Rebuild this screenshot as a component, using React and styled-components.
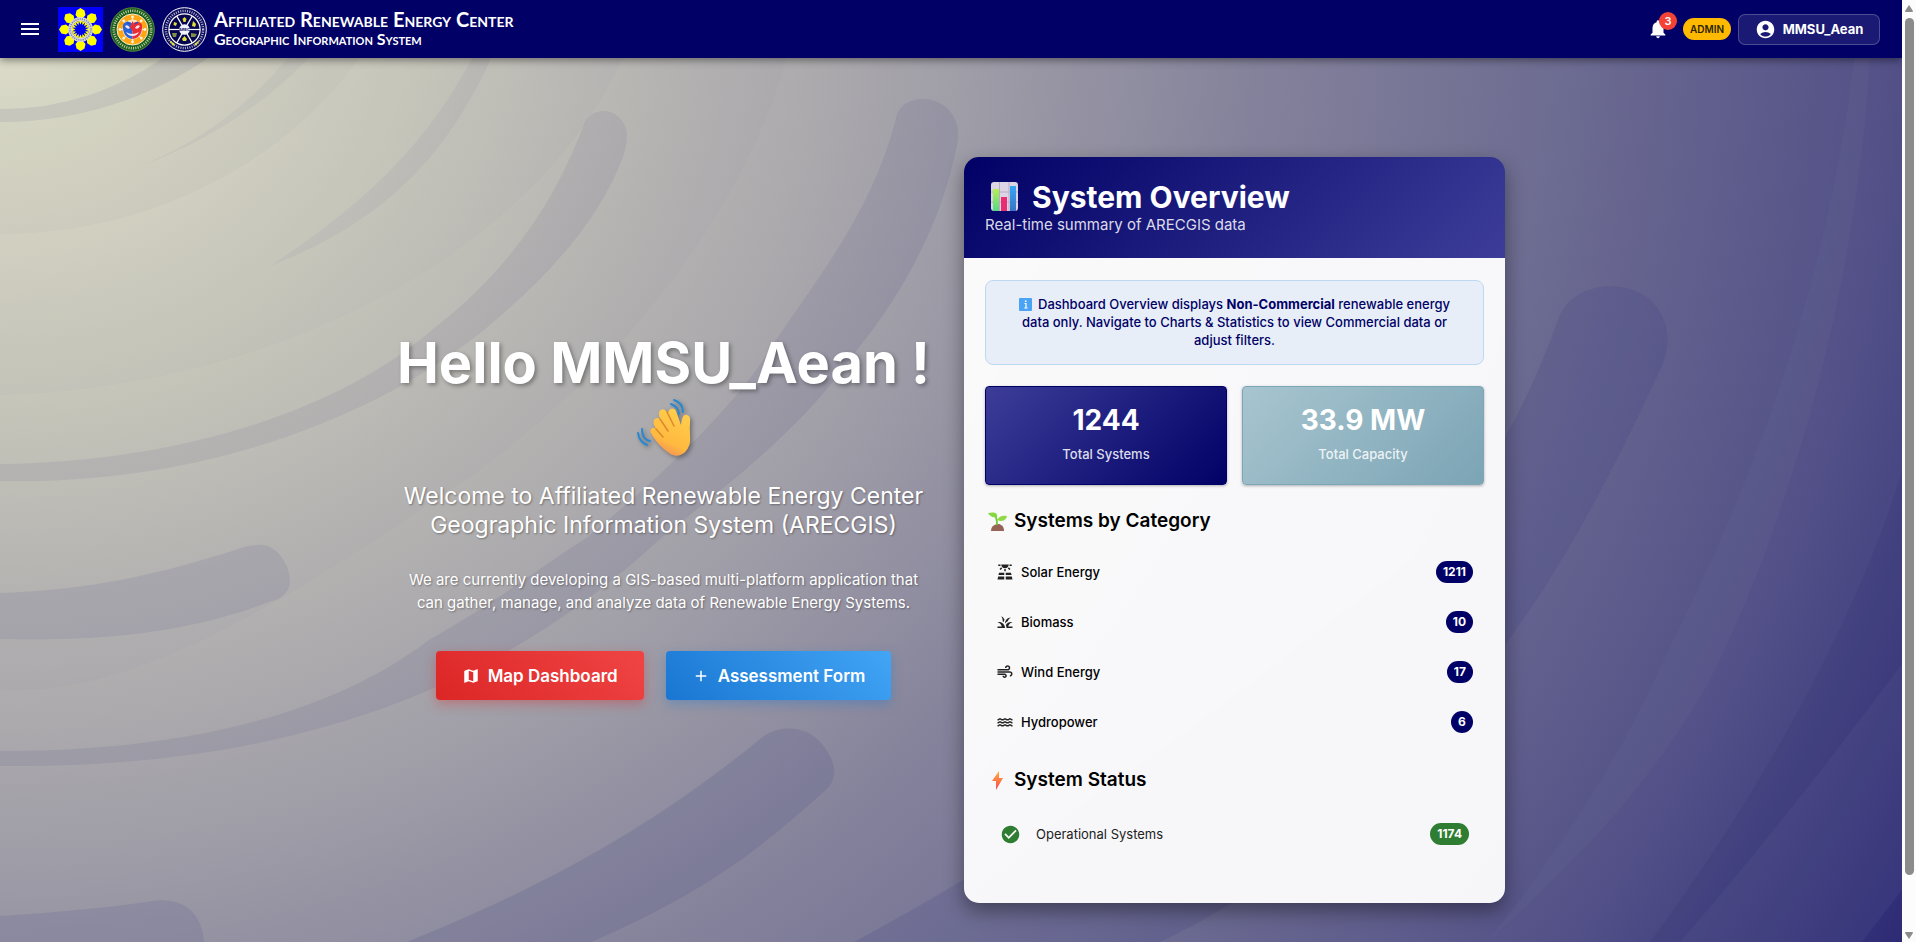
import React from "react";
import styled, { createGlobalStyle } from "styled-components";
import {
  MdMenu,
  MdNotifications,
  MdAccountCircle,
  MdMap,
  MdAdd,
  MdSolarPower,
  MdGrass,
  MdAir,
  MdWater,
  MdCheckCircle,
} from "react-icons/md";

const GlobalStyle = createGlobalStyle`
  *, *::before, *::after { box-sizing: border-box; }
  body {
    margin: 0;
    font-family: Inter, "Open Sans", sans-serif;
    color: #000;
  }
  h1, h2, h3, p, ul { margin: 0; padding: 0; }
  button { font-family: inherit; cursor: pointer; }
`;

const Shell = styled.div`
  display: flex;
  min-height: 100vh;
`;

const Page = styled.div`
  position: relative;
  isolation: isolate;
  flex: 1;
  min-width: 0;
  display: flex;
  flex-direction: column;
  overflow: hidden;
  background: radial-gradient(
    ellipse 116% 207% at 0 0,
    #eeeed0 0%,
    #dbdac3 11%,
    #c1c0b7 25%,
    #9d9ba6 45%,
    #84829b 57%,
    #6e6d92 70%,
    #525087 86%,
    #2e2c79 100%
  );
`;

const Backdrop = styled.svg`
  position: absolute;
  inset: 0;
  z-index: -1;
  width: 100%;
  height: 100%;
`;

const TopBar = styled.header`
  display: flex;
  align-items: center;
  justify-content: space-between;
  height: 58px;
  padding: 0 22px 0 18px;
  background: #000066;
  color: #fff;
  box-shadow: 0 2px 8px rgba(0, 0, 0, 0.45);
`;

const Brand = styled.div`
  display: flex;
  align-items: center;
  gap: 7px;
`;

const IconButton = styled.button`
  position: relative;
  display: flex;
  padding: 0;
  border: 0;
  background: none;
  color: inherit;
`;

const MenuButton = styled(IconButton)`
  margin-right: 9px;
`;

const Logo = styled.svg`
  display: block;
  width: 45px;
  height: 45px;
`;

const BrandText = styled.div`
  font-family: Lato, "Open Sans", sans-serif;
  font-variant: small-caps;
  font-weight: 700;
`;

const BrandName = styled.div`
  font-size: 20px;
  line-height: 20px;
`;

const BrandSub = styled.div`
  font-size: 16px;
  line-height: 20px;
`;

const Account = styled.div`
  display: flex;
  align-items: center;
`;

const Count = styled.span`
  position: absolute;
  top: -6px;
  right: -8px;
  width: 18px;
  height: 18px;
  border-radius: 9px;
  background: #f44336;
  font-size: 11px;
  font-weight: 600;
  line-height: 18px;
  text-align: center;
`;

const RoleChip = styled.span`
  margin: 0 7px 0 14px;
  width: 48px;
  border-radius: 11px;
  background: #ffb900;
  color: #2b2400;
  font-size: 10px;
  font-weight: 600;
  line-height: 22px;
  text-align: center;
`;

const UserButton = styled.button`
  display: flex;
  align-items: center;
  justify-content: center;
  gap: 7px;
  width: 142px;
  height: 31px;
  padding: 0;
  border: 1px solid rgba(255, 255, 255, 0.22);
  border-radius: 7px;
  background: rgba(255, 255, 255, 0.1);
  color: #fff;
  font-size: 13px;
  font-weight: 700;
`;

const Main = styled.main`
  flex: 1;
  display: grid;
  grid-template-columns: minmax(0, 541px) minmax(0, 541px);
  justify-content: center;
  align-items: center;
  gap: 30px;
  padding: 99px 4px 39px 0;
`;

const Hero = styled.section`
  padding-bottom: 30px;
  color: #fff;
  text-align: center;
`;

const Greeting = styled.h1`
  font-size: 56px;
  font-weight: 700;
  line-height: 67px;
  white-space: nowrap;
  text-shadow: 2px 2px 4px rgba(0, 0, 0, 0.35);
`;

const Wave = styled.svg`
  display: block;
  width: 56px;
  height: 67px;
  margin: 0 auto;
  filter: drop-shadow(2px 2px 2px rgba(0, 0, 0, 0.35));
`;

const Welcome = styled.p`
  margin-top: 18px;
  font-size: 23px;
  line-height: 29px;
  text-shadow: 1px 1px 2px rgba(0, 0, 0, 0.35);
`;

const Intro = styled.p`
  margin-top: 28px;
  padding: 0 8px;
  font-size: 15px;
  line-height: 23px;
  text-shadow: 1px 1px 2px rgba(0, 0, 0, 0.35);
`;

const Actions = styled.div`
  display: flex;
  justify-content: center;
  gap: 22px;
  margin-top: 37px;
`;

const tones = {
  red: ["#dc2626", "#f04444", "rgba(220, 38, 38, 0.35)"],
  blue: ["#1976d2", "#42a5f5", "rgba(25, 118, 210, 0.35)"],
};

const ActionButton = styled.button`
  display: flex;
  align-items: center;
  gap: 8px;
  height: 49px;
  padding: 0 26px;
  border: 0;
  border-radius: 4px;
  background: linear-gradient(45deg, ${(p) => tones[p.$tone][0]}, ${(p) => tones[p.$tone][1]});
  box-shadow: 0 4px 12px ${(p) => tones[p.$tone][2]};
  color: #fff;
  font-size: 17px;
  font-weight: 600;
`;

const Card = styled.section`
  border-radius: 15px;
  overflow: hidden;
  box-shadow: 0 8px 20px rgba(0, 0, 0, 0.4);
`;

const CardHeader = styled.header`
  height: 101px;
  padding: 21px;
  background: linear-gradient(135deg, #000066, #3d3d99);
  color: #fff;
`;

const CardTitle = styled.h2`
  display: flex;
  align-items: center;
  gap: 9px;
  font-size: 30px;
  font-weight: 700;
  line-height: 38px;
`;

const CardSubtitle = styled.p`
  font-size: 15px;
  line-height: 18px;
  color: rgba(255, 255, 255, 0.86);
`;

const Emoji = styled.svg`
  flex: none;
  width: ${(p) => p.$size}px;
  height: ${(p) => p.$size}px;
`;

const CardBody = styled.div`
  padding: 22px 21px 46px;
  background: rgba(255, 255, 255, 0.95);
`;

const Notice = styled.p`
  padding: 14px 20px 15px;
  border: 1px solid #bdd8f1;
  border-radius: 8px;
  background: #e7eef7;
  color: #000066;
  font-size: 13px;
  font-weight: 500;
  line-height: 18px;
  text-align: center;

  svg {
    margin-right: 6px;
    vertical-align: -2px;
  }
  strong { font-weight: 700; }
`;

const Stats = styled.div`
  display: grid;
  grid-template-columns: 1fr 1fr;
  gap: 15px;
  margin-top: 21px;
`;

const Stat = styled.div`
  height: 99px;
  padding: 14px;
  border: 1px solid ${(p) => (p.$teal ? "#7ba7b7" : "#000066")};
  border-radius: 4px;
  background: ${(p) =>
    p.$teal
      ? "linear-gradient(135deg, #a8c5cf, #7ba4b5) border-box"
      : "linear-gradient(135deg, #3d3d99, #000066) border-box"};
  box-shadow: 0 1px 3px rgba(0, 0, 0, 0.3);
  color: #fff;
  text-align: center;
`;

const StatValue = styled.div`
  font-size: 28px;
  font-weight: 700;
  line-height: 38px;
`;

const StatLabel = styled.div`
  margin-top: 6px;
  font-size: 13px;
  font-weight: 500;
  line-height: 18px;
  color: rgba(255, 255, 255, 0.86);
`;

const SectionTitle = styled.h3`
  display: flex;
  align-items: center;
  gap: 4px;
  margin-top: ${(p) => p.$top}px;
  font-size: 19px;
  font-weight: 600;
  line-height: 26px;
`;

const List = styled.ul`
  list-style: none;
  margin-top: ${(p) => p.$top}px;
`;

const Row = styled.li`
  display: flex;
  align-items: center;
  gap: ${(p) => (p.$status ? 15 : 7)}px;
  height: ${(p) => (p.$status ? 46 : 50)}px;
  padding: ${(p) => (p.$status ? "0 15px" : "0 11px")};
  color: ${(p) => (p.$status ? "#222" : "#000")};
  font-size: 13px;
  font-weight: ${(p) => (p.$status ? 400 : 500)};
`;

const RowLabel = styled.span`
  flex: 1;
`;

const Pill = styled.span`
  min-width: 22px;
  padding: 0 7px;
  border-radius: 11px;
  background: ${(p) => (p.$green ? "#2e7d32" : "#000066")};
  color: #fff;
  font-size: 12px;
  font-weight: 700;
  line-height: 22px;
  text-align: center;
`;

const ScrollTrack = styled.div`
  display: flex;
  flex-direction: column;
  align-items: center;
  width: 14px;
  padding: 5px 0 3px 0;
  background: #fcfcfc;
`;

const ScrollThumb = styled.div`
  flex: 15;
  width: 9px;
  margin: 6px 0 0;
  border-radius: 5px;
  background: #8b8b8b;
`;

const ScrollRest = styled.div`
  flex: 1;
`;

const ScrollArrow = styled.svg`
  display: block;
  width: 10px;
  height: 7px;
`;

function Swirls() {
  return (
    <Backdrop viewBox="0 0 1902 942" preserveAspectRatio="none" aria-hidden="true">
      <g fill="#3a3880">
        <path opacity=".1" d="M0 109A276 276 0 0 0 168 54H214A367 367 0 0 1 0 122Z" />
        <path opacity=".05" d="M291 54H313Q240 130 140 166Q230 130 291 54Z" />
        <path opacity=".03" d="M0 0H392C330 140 170 234 0 234Z" />
        <path opacity=".05" d="M474 54H493C450 150 390 220 270 266C370 200 430 140 474 54Z" />
        <path opacity=".02" d="M0 0H640C600 200 330 386 0 395Z" />
        <path opacity=".08" d="M585 122C594 106 616 108 624 124C629 134 627 142 624 154C600 220 550 275 484 330C360 430 180 485 0 481V464C180 462 340 410 432 330C510 270 556 200 585 122Z" />
        <path opacity=".02" d="M0 0H800C770 180 640 350 480 470C330 570 150 700 0 690Z" />
        <path opacity=".1" d="M896 118C901 92 946 92 956 122C960 132 958 142 956 150C940 225 905 290 857 350C805 425 740 475 661 538C540 650 350 770 0 766V751C220 751 350 700 429 640C500 600 550 560 588 537C680 460 740 400 778 337C835 255 875 200 896 118Z" />
        <path opacity=".1" d="M0 593C90 590 160 574 235 550Q252 544 263 545C286 548 296 584 286 592Q282 599 269 602C180 636 90 641 0 639Z" />
        <path opacity=".14" d="M407 942C560 880 660 820 759 740C776 724 806 724 822 744C836 762 838 776 828 788C760 850 700 895 591 942Z" />
        <path opacity=".12" d="M0 916Q90 910 146 902C180 895 202 910 204 942H0Z" />
        <path opacity=".16" d="M1559 317C1575 278 1640 276 1660 312C1672 334 1668 352 1661 368C1600 500 1540 610 1460 700C1390 790 1290 880 1160 942H854C1120 800 1300 640 1400 570C1480 500 1530 400 1559 317Z" />
      </g>
      <g fill="#282468">
        <path opacity=".13" d="M1902 471C1860 610 1770 780 1650 942H1902Z" />
        <path opacity=".12" d="M1902 890L1862 942H1902Z" />
      </g>
      <g fill="#fff">
        <path opacity=".025" d="M1855 54C1830 260 1770 450 1667 653C1620 760 1560 850 1487 942C1590 850 1660 770 1710 680C1800 500 1860 260 1870 54Z" />
        <path opacity=".03" d="M1902 664C1830 760 1760 850 1680 942H1862L1902 890Z" />
      </g>
    </Backdrop>
  );
}

function SunLogo() {
  const petals = [0, 45, 90, 135, 180, 225, 270, 315];
  const spikes = Array.from({ length: 16 }, (_, i) => i * 22.5);
  return (
    <Logo viewBox="0 0 45 45" role="img" aria-label="Department of Energy">
      <rect width="45" height="45" fill="#0000ff" />
      {petals.map((a) => (
        <path
          key={a}
          transform={`rotate(${a} 22.5 22.5)`}
          d="M20 11L17.500 8L18.500 3.500L22.500 1L26.500 3.500L27.500 8L25 11Z"
          fill="#ffff00"
        />
      ))}
      <circle cx="22.500" cy="22.500" r="10.500" fill="#0000f0" stroke="#d6d6dc" strokeWidth="4" />
      <circle cx="22.500" cy="22.500" r="10.500" fill="none" stroke="#77778c" strokeWidth="1.500" strokeDasharray="1 1.200" />
      {spikes.map((a) => (
        <path key={a} transform={`rotate(${a} 22.500 22.500)`} d="M20.800 14L22.500 17.600L24.200 14Z" fill="#ffff00" />
      ))}
    </Logo>
  );
}

function UniversityLogo() {
  const rays = Array.from({ length: 8 }, (_, i) => i * 45);
  return (
    <Logo viewBox="0 0 45 45" role="img" aria-label="Mariano Marcos State University">
      <circle cx="22.500" cy="22.500" r="21.800" fill="#176022" stroke="#5f8a3c" strokeWidth="1" />
      <circle cx="22.500" cy="22.500" r="18.700" fill="none" stroke="#d0d0a0" strokeWidth="2.600" strokeDasharray="1 1.300" />
      <circle cx="22.500" cy="22.500" r="15.500" fill="#ffa514" stroke="#f4f0d0" strokeWidth="1" />
      {rays.map((a) => (
        <g key={a} transform={`rotate(${a} 22.500 22.500)`} fill="#fff5dc">
          <path d="M21.300 14L22.500 10L23.700 14Z" />
          <circle cx="22.500" cy="10" r="1.400" />
        </g>
      ))}
      <circle cx="22.500" cy="22.500" r="10" fill="#fbe3c4" />
      <path d="M22.500 17C19 13 14 15 13 18C12.500 25 15 31 22.500 32Z" fill="#2862dc" />
      <path d="M22.500 17C26 13 31 15 32 18C32.500 25 30 31 22.500 32Z" fill="#e92c35" />
      <path d="M15 19Q18 17 20 21Q17 23 15 19ZM30 19Q27 17 25 21Q28 23 30 19ZM16 25Q22 29 29 25Q27 29 22.500 29Q18 29 16 25Z" fill="#f3e8ef" />
      <path d="M22.500 14L25 20L22.500 24L20 20Z" fill="#e92c35" />
      <path d="M17 15L20 17M28 15L25 17" stroke="#1d52c0" strokeWidth="1.500" />
    </Logo>
  );
}

function CenterLogo() {
  const spokes = [0, 60, 120, 180, 240, 300];
  return (
    <Logo viewBox="0 0 45 45" role="img" aria-label="Affiliated Renewable Energy Center">
      <circle cx="22.500" cy="22.500" r="21.800" fill="#0b0b5e" stroke="#fff" strokeWidth="1" />
      <circle cx="22.500" cy="22.500" r="18.600" fill="none" stroke="#b8b8d4" strokeWidth="2.400" strokeDasharray="1 1.300" />
      <circle cx="22.500" cy="22.500" r="15.600" fill="#060650" stroke="#fff" strokeWidth="1.200" />
      {spokes.map((a) => (
        <path key={a} transform={`rotate(${a} 22.500 22.500)`} d="M7 22.500H18" stroke="#fff" strokeWidth="1.200" />
      ))}
      <g fill="#e3df38">
        <path d="M22.500 10L24.500 12L23.500 15H21.500L20.500 12Z" />
        <path d="M12 15L15 16L14 19L11.500 18Z" />
        <path d="M31 14L34 17L33 20L30 19Z" />
        <path d="M10 26H15L14 30H11ZM29 26L35 27L33 30H29Z" fill="#7f9146" />
        <path d="M22.500 29L25 32L24 34H21L20 32Z" />
        <path d="M7 33L13 37L11 39ZM38 33L32 37L34 39Z" />
      </g>
      <circle cx="22.500" cy="22.500" r="5.300" fill="#f4f4ff" />
      <text x="22.500" y="24" textAnchor="middle" fontSize="4" fontWeight="700" fill="#0b0b5e">
        AREC
      </text>
    </Logo>
  );
}

function WavingHand() {
  return (
    <Wave viewBox="0 0 56 67" aria-hidden="true">
      <defs>
        <linearGradient id="skin" x1="0.700" y1="0" x2="0.300" y2="1">
          <stop offset="0" stopColor="#ffcf4d" />
          <stop offset=".7" stopColor="#ffb93f" />
          <stop offset="1" stopColor="#f28a5c" />
        </linearGradient>
      </defs>
      <path
        d="M15 36C13 32 17 29 20 32L18 28C16 23 20 19 24 22L23 18C22 13 27 10 30 14L32 16C33 11 38 10 40 14L45 28C46 20 48 17 51 18C55 19 54 23 54 27C53 37 56 44 52 51C48 59 39 61 33 56C26 51 19 44 15 36Z"
        fill="url(#skin)"
      />
      <path d="M20 32L27 40M24 22L32 34M31 15L38 29" fill="none" stroke="#dd8a2e" strokeWidth="1.600" strokeLinecap="round" />
      <path d="M38 3C44 5 47 9 47 15M35 7C40 9 43 12 43 17M6 32C6 39 9 43 14 44M2 36C3 43 6 46 11 48" fill="none" stroke="#2389d4" strokeWidth="2" strokeLinecap="round" />
    </Wave>
  );
}

function ChartEmoji() {
  return (
    <Emoji $size={38} viewBox="0 0 38 38" aria-hidden="true">
      <defs>
        <linearGradient id="barGreen" x1="0" y1="0" x2="0" y2="1"><stop stopColor="#b4f04f" /><stop offset="1" stopColor="#55d98a" /></linearGradient>
        <linearGradient id="barBlue" x1="0" y1="0" x2="0" y2="1"><stop stopColor="#35a8f5" /><stop offset="1" stopColor="#3b72c4" /></linearGradient>
      </defs>
      <rect x="6" y="4" width="27" height="29" rx="3" fill="#dcd5e6" />
      <path d="M14.500 4V33M24 4V33M6 14H33M6 24H33" stroke="#b9adc8" strokeWidth="1" />
      <rect x="8" y="11" width="6" height="22" fill="url(#barGreen)" />
      <rect x="16" y="19" width="6" height="14" fill="#ea2d72" />
      <rect x="25" y="8" width="6" height="25" fill="url(#barBlue)" />
    </Emoji>
  );
}

function InfoEmoji() {
  return (
    <Emoji $size={13} viewBox="0 0 13 13" aria-hidden="true">
      <rect width="13" height="13" rx="1" fill="#4ba3f5" />
      <path d="M5.500 5.500H7V10M5.300 10H8.500" fill="none" stroke="#fff" strokeWidth="1.200" />
      <circle cx="6.700" cy="3.200" r=".9" fill="#fff" />
    </Emoji>
  );
}

function SproutEmoji() {
  return (
    <Emoji $size={25} viewBox="0 0 25 25" aria-hidden="true">
      <path d="M6 22C6 17 10 15 13 15S19 17 19 22Z" fill="#966357" />
      <path d="M12 16C12 11 12 9 10 7" fill="none" stroke="#6fcb38" strokeWidth="1.800" />
      <path d="M3 4C8 3 13 3 12 8C7 9 5 7 3 4Z" fill="#86d840" />
      <path d="M12 11C14 7 18 6 22 7C21 12 16 13 12 11Z" fill="#8fd944" />
    </Emoji>
  );
}

function BoltEmoji() {
  return (
    <Emoji $size={25} viewBox="0 0 25 25" aria-hidden="true">
      <defs>
        <linearGradient id="bolt" x1="0" y1="0" x2="0" y2="1"><stop stopColor="#ffae3c" /><stop offset="1" stopColor="#f9484f" /></linearGradient>
      </defs>
      <path d="M14 3L7 13H11L11 22L18 10H14Z" fill="url(#bolt)" />
    </Emoji>
  );
}

const categories = [
  { name: "Solar Energy", count: 1211, Icon: MdSolarPower },
  { name: "Biomass", count: 10, Icon: MdGrass },
  { name: "Wind Energy", count: 17, Icon: MdAir },
  { name: "Hydropower", count: 6, Icon: MdWater },
];

export default function App() {
  return (
    <Shell>
      <GlobalStyle />
      <Page>
        <Swirls />
        <TopBar>
          <Brand>
            <MenuButton aria-label="Open menu">
              <MdMenu size={24} />
            </MenuButton>
            <SunLogo />
            <UniversityLogo />
            <CenterLogo />
            <BrandText>
              <BrandName>Affiliated Renewable Energy Center</BrandName>
              <BrandSub>Geographic Information System</BrandSub>
            </BrandText>
          </Brand>
          <Account>
            <IconButton aria-label="Notifications">
              <MdNotifications size={22} />
              <Count>3</Count>
            </IconButton>
            <RoleChip>ADMIN</RoleChip>
            <UserButton>
              <MdAccountCircle size={21} />
              MMSU_Aean
            </UserButton>
          </Account>
        </TopBar>
        <Main>
          <Hero>
            <Greeting>Hello MMSU_Aean !</Greeting>
            <WavingHand />
            <Welcome>
              Welcome to Affiliated Renewable Energy Center Geographic Information System (ARECGIS)
            </Welcome>
            <Intro>
              We are currently developing a GIS-based multi-platform application that can gather,
              manage, and analyze data of Renewable Energy Systems.
            </Intro>
            <Actions>
              <ActionButton $tone="red">
                <MdMap size={18} />
                Map Dashboard
              </ActionButton>
              <ActionButton $tone="blue">
                <MdAdd size={18} />
                Assessment Form
              </ActionButton>
            </Actions>
          </Hero>
          <Card>
            <CardHeader>
              <CardTitle>
                <ChartEmoji />
                System Overview
              </CardTitle>
              <CardSubtitle>Real-time summary of ARECGIS data</CardSubtitle>
            </CardHeader>
            <CardBody>
              <Notice>
                <InfoEmoji />
                Dashboard Overview displays <strong>Non-Commercial</strong> renewable energy data
                only. Navigate to Charts &amp; Statistics to view Commercial data or adjust filters.
              </Notice>
              <Stats>
                <Stat>
                  <StatValue>1244</StatValue>
                  <StatLabel>Total Systems</StatLabel>
                </Stat>
                <Stat $teal>
                  <StatValue>33.9 MW</StatValue>
                  <StatLabel>Total Capacity</StatLabel>
                </Stat>
              </Stats>
              <SectionTitle $top={23}>
                <SproutEmoji />
                Systems by Category
              </SectionTitle>
              <List $top={13}>
                {categories.map(({ name, count, Icon }) => (
                  <Row key={name}>
                    <Icon size={18} color="#222" />
                    <RowLabel>{name}</RowLabel>
                    <Pill>{count}</Pill>
                  </Row>
                ))}
              </List>
              <SectionTitle $top={20}>
                <BoltEmoji />
                System Status
              </SectionTitle>
              <List $top={18}>
                <Row $status>
                  <MdCheckCircle size={21} color="#2e7d32" />
                  <RowLabel>Operational Systems</RowLabel>
                  <Pill $green>1174</Pill>
                </Row>
              </List>
            </CardBody>
          </Card>
        </Main>
      </Page>
      <ScrollTrack aria-hidden="true">
        <ScrollArrow viewBox="0 0 10 7">
          <path d="M5 0L9 6Q9 7 8 7H2Q1 7 1 6Z" fill="#8b8b8b" />
        </ScrollArrow>
        <ScrollThumb />
        <ScrollRest />
        <ScrollArrow viewBox="0 0 10 7">
          <path d="M5 7L9 1Q9 0 8 0H2Q1 0 1 1Z" fill="#8b8b8b" />
        </ScrollArrow>
      </ScrollTrack>
    </Shell>
  );
}
